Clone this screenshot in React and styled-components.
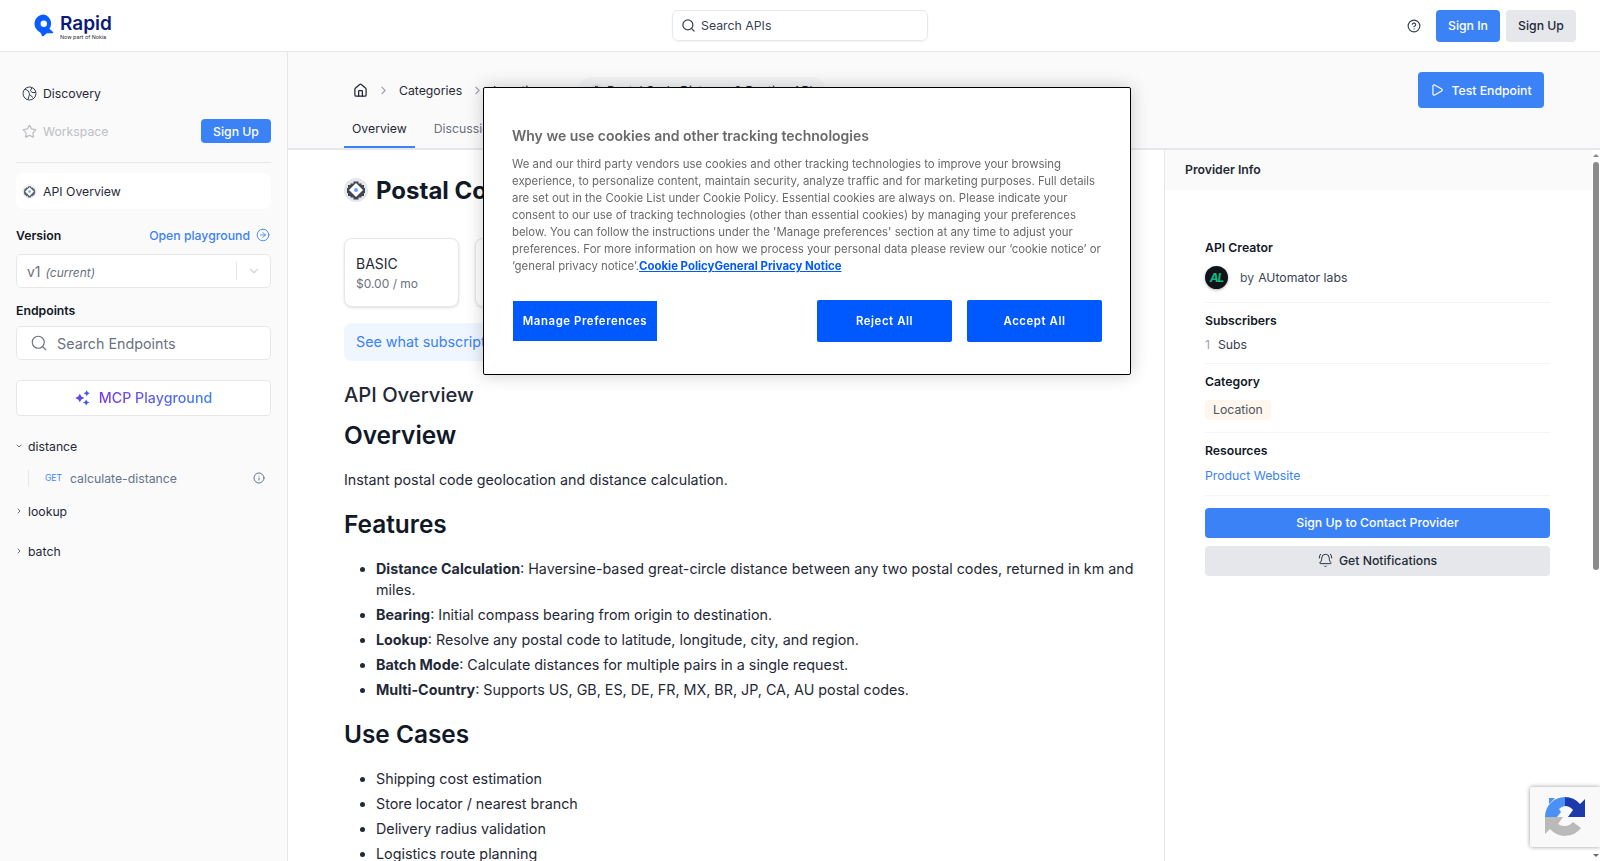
import React from 'react'
import styled, { createGlobalStyle } from 'styled-components'
import { Search, ChevronRight, ChevronDown, Home, Play, BellRing, CircleHelp, Star, CircleArrowRight, Info } from 'lucide-react'

const GlobalStyle = createGlobalStyle`
  html, body { margin: 0; padding: 0; height: 100%; overflow: hidden; background: #fff; }
  body { font-family: Inter, "Liberation Sans", sans-serif; color: #111827; }
  * { box-sizing: border-box; }
`

const Page = styled.div`
  height: 861px;
  display: flex;
  flex-direction: column;
  overflow: hidden;
`

/* top bar */
const TopBar = styled.header`
  height: 52px;
  flex: none;
  display: flex;
  align-items: center;
  padding: 0 24px 0 34px;
  background: #fff;
  border-bottom: 1px solid #e5e7eb;
`
const Logo = styled.div`
  width: 638px;
  display: flex;
  gap: 6px;
  margin-top: 3px;
`
const LogoText = styled.div`
  display: flex;
  flex-direction: column;
  color: #0b1a78;
`
const LogoName = styled.span`
  font-size: 19px;
  font-weight: 600;
  line-height: 20px;
`
const LogoSub = styled.span`
  font-size: 5.4px;
  line-height: 7px;
  color: #1f2937;
  white-space: nowrap;
`
const TopSearch = styled.div`
  width: 256px;
  height: 31px;
  display: flex;
  align-items: center;
  gap: 5px;
  padding: 0 8px;
  border: 1px solid #e5e7eb;
  border-radius: 6px;
  font-size: 12.3px;
  color: #374151;
  box-shadow: 0 1px 2px rgba(0, 0, 0, 0.05);
`
const TopActions = styled.div`
  display: flex;
  align-items: center;
  gap: 6px;
  margin-left: auto;
  color: #374151;
`
const Button = styled.button`
  height: ${p => p.$h || 32}px;
  width: ${p => p.$w ? p.$w + 'px' : 'auto'};
  padding: 0;
  border: none;
  border-radius: 4px;
  background: ${p => p.$grey ? '#e5e7eb' : '#3b82f6'};
  color: ${p => p.$grey ? '#1f2937' : '#fff'};
  font: 500 12.25px Inter, sans-serif;
  display: flex;
  align-items: center;
  justify-content: center;
  gap: 6px;
`
const HelpSlot = styled.div`
  display: flex;
  margin-right: 9px;
`

const Body = styled.div`
  flex: 1;
  min-height: 0;
  display: flex;
`

/* left sidebar */
const Sidebar = styled.aside`
  width: 288px;
  flex: none;
  padding: 22px 16px 0;
  background: #fafafa;
  border-right: 1px solid #e5e7eb;
  font-size: 12.25px;
`
const NavRow = styled.div`
  display: flex;
  align-items: center;
  justify-content: space-between;
  height: 38px;
  padding-left: 6px;
  color: ${p => p.$muted ? '#bdbfc4' : '#1f2937'};
`
const NavLabel = styled.span`
  display: flex;
  align-items: center;
  gap: 6px;
`
const Divider = styled.div`
  height: 1px;
  background: #e5e7eb;
  margin: 12px 0 10px;
`
const OverviewCard = styled.div`
  height: 36px;
  display: flex;
  align-items: center;
  gap: 6px;
  padding-left: 6px;
  background: #fff;
  border-radius: 8px;
  color: #1f2937;
`
const FieldHead = styled.div`
  display: flex;
  justify-content: space-between;
  align-items: center;
  height: 18px;
  margin: ${p => p.$top}px 0 ${p => p.$bottom}px;
  font-weight: 600;
  color: #111827;
`
const PlaygroundLink = styled.span`
  display: flex;
  align-items: center;
  gap: 6px;
  font-weight: 500;
  color: #3b82f6;
  padding-right: 1px;
`
const SelectBox = styled.div`
  height: 34px;
  display: flex;
  align-items: center;
  justify-content: space-between;
  padding: 0 9px 0 10px;
  background: #fff;
  border: 1px solid #e5e7eb;
  border-radius: 5px;
  font-size: 14px;
  color: #6b7280;
`
const Current = styled.em`
  font-size: 12px;
  margin-left: 5px;
`
const SelectEnd = styled.span`
  display: flex;
  align-items: center;
  gap: 10px;
  color: #d1d5db;
`
const SelectBar = styled.span`
  width: 1px;
  height: 18px;
  background: #e5e7eb;
`
const SearchBox = styled.div`
  height: 34px;
  display: flex;
  align-items: center;
  gap: 9px;
  padding-left: 13px;
  background: #fff;
  border: 1px solid #e5e7eb;
  border-radius: 5px;
  font-size: 14.3px;
  color: #6b7280;
`
const McpButton = styled.div`
  height: 36px;
  margin: 20px 0 21px;
  display: flex;
  align-items: center;
  justify-content: center;
  gap: 8px;
  background: #fff;
  border: 1px solid #e5e7eb;
  border-radius: 4px;
  font-size: 14.25px;
  font-weight: 500;
  line-height: 17px;
  padding-bottom: 1px;
`
const McpLabel = styled.span`
  background: linear-gradient(90deg, #7c3aed, #3b82f6);
  -webkit-background-clip: text;
  background-clip: text;
  color: transparent;
`
const TreeGroup = styled.div`
  display: flex;
  align-items: center;
  gap: 5px;
  height: 18px;
  margin-left: -1px;
  margin-bottom: ${p => p.$gap}px;
  color: #1f2937;
`
const TreeItem = styled.div`
  display: flex;
  align-items: center;
  height: 16px;
  margin: 0 6px 16px 12px;
  padding-left: 16px;
  border-left: 1px solid #e5e7eb;
  color: #64748b;
`
const Method = styled.span`
  font-size: 8.5px;
  color: #3b82f6;
  width: 25px;
`
const ItemName = styled.span`
  flex: 1;
`

/* main column */
const Main = styled.main`
  flex: 1;
  min-width: 0;
  display: flex;
  flex-direction: column;
`
const MainHead = styled.div`
  height: 98px;
  flex: none;
  padding: 0 56px;
  display: flex;
  justify-content: space-between;
  background: #fafafa;
  border-bottom: 2px solid #e5e7eb;
`
const HeadLeft = styled.div`
  display: flex;
  flex-direction: column;
`
const Crumbs = styled.div`
  height: 26px;
  margin-top: 25px;
  display: flex;
  align-items: center;
  gap: 9px;
  padding-left: 9px;
  font-size: 12.25px;
  color: #1f2937;
`
const CrumbPill = styled.span`
  height: 26px;
  display: flex;
  align-items: center;
  gap: 4px;
  padding: 0 12px;
  border-radius: 13px;
  background: #f3f4f6;
  margin-left: 26px;
`
const Tabs = styled.div`
  display: flex;
  margin-top: 11px;
  gap: 4px;
`
const Tab = styled.div`
  height: 34px;
  padding: 7px 8px 0;
  font-size: 12.25px;
  color: ${p => p.$active ? '#1f2937' : '#6b7280'};
  border-bottom: 2px solid ${p => p.$active ? '#3b82f6' : 'transparent'};
  margin-bottom: -2px;
  margin-left: ${p => p.$push || 0}px;
`
const TestButton = styled(Button)`
  margin-top: 20px;
  gap: 7px;
`
const Columns = styled.div`
  flex: 1;
  min-height: 0;
  display: flex;
`
const Content = styled.div`
  flex: 1;
  min-width: 0;
  padding: 25px 28px 0 56px;
  overflow: hidden;
`
const TitleRow = styled.div`
  display: flex;
  align-items: center;
  gap: 8px;
  height: 30px;
`
const Title = styled.h1`
  margin: 0;
  font-size: 24px;
  font-weight: 700;
  color: #111827;
  white-space: nowrap;
`
const Plans = styled.div`
  display: flex;
  gap: 16px;
  margin-top: 33px;
`
const PlanCard = styled.div`
  width: 115px;
  height: 69px;
  padding: 14px 11px;
  background: #fff;
  border: 1px solid #e5e7eb;
  border-radius: 8px;
  box-shadow: 0 1px 3px rgba(0, 0, 0, 0.12);
`
const PlanName = styled.div`
  font-size: 14px;
  line-height: 21px;
  color: #1f2937;
`
const PlanPrice = styled.div`
  margin-top: 1px;
  font-size: 12px;
  line-height: 18px;
  color: #6b7280;
`
const Banner = styled.div`
  width: 700px;
  height: 38px;
  margin-top: 16px;
  padding: 0 12px 2px;
  display: flex;
  align-items: center;
  background: #eff6ff;
  border-radius: 8px;
  font-size: 14.3px;
  color: #3b82f6;
  white-space: nowrap;
`
const Article = styled.article`
  color: #1f2937;
  font-size: 14.3px;
  line-height: 25px;
`
const DocTitle = styled.h2`
  margin: 20px 0 0;
  font-size: 20.2px;
  font-weight: 500;
  line-height: 28px;
`
const H2 = styled.h2`
  margin: ${p => p.$top}px 0 ${p => p.$bottom}px;
  font-size: 24.4px;
  font-weight: 600;
  line-height: 32px;
  color: #111827;
`
const Para = styled.p`
  margin: 0;
`
const List = styled.ul`
  margin: 0;
  padding-left: 32px;
`
const ListItem = styled.li`
  line-height: 21px;
  margin-bottom: 4px;
`

/* right panel */
const Panel = styled.aside`
  width: 436px;
  flex: none;
  position: relative;
  border-left: 1px solid #e5e7eb;
  padding-right: 8px;
`
const PanelHead = styled.div`
  height: 40px;
  display: flex;
  align-items: center;
  padding: 0 0 2px 20px;
  background: #fafafa;
  font-size: 12.25px;
  font-weight: 600;
  color: #1f2937;
`
const PanelBody = styled.div`
  padding: 49px 42px 0 40px;
`
const Section = styled.div`
  padding-bottom: ${p => p.$pb}px;
  margin-bottom: 9px;
  border-bottom: 1px solid #f3f4f6;
`
const SectionLabel = styled.div`
  font-size: 12.25px;
  font-weight: 600;
  line-height: 18px;
  color: #111827;
`
const CreatorRow = styled.div`
  display: flex;
  align-items: center;
  gap: 12px;
  margin-top: 9px;
  font-size: 12.25px;
  color: #374151;
`
const By = styled.span`
  margin-right: 4px;
  color: #4b5563;
`
const Avatar = styled.span`
  width: 23px;
  height: 23px;
  border-radius: 50%;
  display: flex;
  align-items: center;
  justify-content: center;
  background: #101418;
  color: #10b981;
  font-size: 12px;
  font-weight: 700;
  font-style: italic;
  letter-spacing: -1px;
  box-shadow: 0 1px 3px rgba(0, 0, 0, 0.3);
`
const SubsRow = styled.div`
  display: flex;
  gap: 8px;
  margin-top: 6px;
  font-size: 12.25px;
  line-height: 18px;
  color: #374151;
`
const SubsCount = styled.span`
  color: #9ca3af;
`
const Tag = styled.span`
  display: inline-block;
  height: 20px;
  margin-top: 9px;
  padding: 0 8px;
  border-radius: 4px;
  background: #fff7ed;
  font-size: 12.25px;
  line-height: 20px;
  color: #4b5563;
`
const PanelLink = styled.div`
  margin-top: 7px;
  font-size: 12.25px;
  line-height: 18px;
  color: #3b82f6;
`
const PanelButtons = styled.div`
  display: flex;
  flex-direction: column;
  gap: 8px;
  margin-top: 12px;
`
const PanelButton = styled(Button)`
  padding-bottom: 2px;
`
const ScrollTrack = styled.div`
  position: absolute;
  top: 0;
  right: 0;
  bottom: 0;
  width: 8px;
  background: #fff;
`
const ScrollThumb = styled.div`
  position: absolute;
  top: 12px;
  left: 1px;
  width: 6px;
  height: 408px;
  border-radius: 3px;
  background: #8b8b8b;
`
const ScrollArrow = styled.div`
  position: absolute;
  left: 1px;
  ${p => p.$up ? 'top: 4px;' : 'bottom: 4px;'}
  border-left: 3px solid transparent;
  border-right: 3px solid transparent;
  ${p => p.$up ? 'border-bottom: 3px solid #8b8b8b;' : 'border-top: 3px solid #6b6b6b;'}
`

/* cookie dialog */
const CookieDialog = styled.div`
  position: fixed;
  left: 483px;
  top: 87px;
  width: 648px;
  height: 288px;
  padding: 38px 28px 0 28px;
  background: #fff;
  border: 1px solid #000;
  border-radius: 2px;
  box-shadow: 0 0 18px rgba(0, 0, 0, 0.2);
`
const CookieTitle = styled.h3`
  margin: 0 0 10px;
  font-size: 14px;
  font-weight: 600;
  line-height: 20px;
  color: #696969;
`
const CookieText = styled.p`
  margin: 0;
  font-size: 11.4px;
  line-height: 17px;
  color: #696969;
`
const CookieLink = styled.a`
  font-weight: 700;
  color: #0059ff;
  text-decoration: underline;
`
const CookieActions = styled.div`
  display: flex;
  align-items: flex-end;
  margin-top: 25px;
  padding-left: 1px;
`
const CookieButton = styled.button`
  height: ${p => p.$wide ? 40 : 42}px;
  width: ${p => p.$wide ? 144 : 135}px;
  margin-left: ${p => p.$push || 0}px;
  margin-bottom: ${p => p.$wide ? 1 : 0}px;
  border: none;
  border-radius: ${p => p.$wide ? 0 : 2}px;
  background: #0059ff;
  color: #fff;
  font: 600 11.4px Inter, sans-serif;
  letter-spacing: 0.05em;
`

const RecaptchaBadge = styled.div`
  position: fixed;
  left: 1530px;
  top: 787px;
  width: 70px;
  height: 60px;
  display: flex;
  align-items: center;
  padding-left: 14px;
  background: #f9f9f9;
  border-radius: 2px 0 0 2px;
  box-shadow: 0 0 4px rgba(0, 0, 0, 0.4);
`

const RapidIcon = () => (
  <svg width="20" height="23" viewBox="0 0 20 23">
    <path d="M9.800 0.500a9.300 9.300 0 0 0-4 17.700c0.800 0.400 1.300 1 1.500 1.900l0.300 1.200c0.200 1 1.200 1.300 2 0.700l2.500-2.200c0.500-0.400 1-0.500 1.600-0.500h4.800c0.700 0 1-0.800 0.500-1.300l-3.500-3.200a9.300 9.300 0 0 0-5.600-14.300zm0 6.100a3.200 3.200 0 1 1 0 6.400 3.200 3.200 0 0 1 0-6.400z" fill="#0a5cff" fillRule="evenodd" />
  </svg>
)
const GlobeIcon = () => (
  <svg width="15" height="15" viewBox="0 0 15 15" fill="none" stroke="#374151" strokeWidth="1">
    <circle cx="7.500" cy="7.500" r="6.500" />
    <path d="M3 3l3.500 2 1 3.500-1.500 5M10 1.500L8.500 4.500l1.500 2 3.500 0M7.500 8.500l3.500 3" />
  </svg>
)
const ApiIcon = ({ size, plain }) => (
  <svg width={size} height={size} viewBox="0 0 24 24">
    <circle cx="12" cy="12" r="12" fill={plain ? '#f3f4f6' : '#e5e7eb'} />
    <path d="M9.500 3.500h5v2h3v1.500h2.500v3h1v5h-1v3h-2.500v1.500h-3v2h-5v-2h-3v-1.500H4v-3H3v-5h1v-3h2.500V5.500h3z" fill={plain ? '#5b6270' : '#3f4652'} />
    <path d="M12 5l7 7-7 7-7-7z" fill="#fff" />
    <circle cx="12" cy="12" r="2" fill="#6f9ff0" />
  </svg>
)
const SparkleIcon = () => (
  <svg width="16" height="16" viewBox="0 0 15 15">
    <defs>
      <linearGradient id="mcp" x1="0" y1="0" x2="1" y2="0">
        <stop offset="0" stopColor="#7c3aed" />
        <stop offset="1" stopColor="#2563eb" />
      </linearGradient>
    </defs>
    <path d="M4.500 3.500l1.500 2.500 2.800 1.500-2.800 1.500-1.500 2.500-1.500-2.500L0.200 7.500 3 6zM11 0.200l1 1.800 2 1-2 1-1 1.800-1-1.800-2-1 2-1zM10.500 9l1 1.700 2 1-2 1-1 1.800-1-1.800-2-1 2-1z" fill="url(#mcp)" />
  </svg>
)
const RecaptchaIcon = () => (
  <svg width="42" height="42" viewBox="0 0 42 42">
    <path d="M21 1v9a11 11 0 0 1 8 4l-5 7h17V3l-5 5A20 20 0 0 0 21 1z" fill="#1c3aa9" />
    <path d="M21 1A20 20 0 0 0 1 21h12l4-5-2-3a11 11 0 0 1 6-3zM5 2l6 0-6 6z" fill="#4a90f5" />
    <path d="M1 21v17l5-5a20 20 0 0 0 31-1l-8-6a11 11 0 0 1-15 2l5-7z" fill="#bababa" />
  </svg>
)

const features = [
  ['Distance Calculation', ': Haversine-based great-circle distance between any two postal codes, returned in km and miles.'],
  ['Bearing', ': Initial compass bearing from origin to destination.'],
  ['Lookup', ': Resolve any postal code to latitude, longitude, city, and region.'],
  ['Batch Mode', ': Calculate distances for multiple pairs in a single request.'],
  ['Multi-Country', ': Supports US, GB, ES, DE, FR, MX, BR, JP, CA, AU postal codes.'],
]
const useCases = ['Shipping cost estimation', 'Store locator / nearest branch', 'Delivery radius validation', 'Logistics route planning']

export default function App() {
  return (
    <Page>
      <GlobalStyle />
      <TopBar>
        <Logo>
          <RapidIcon />
          <LogoText>
            <LogoName>Rapid</LogoName>
            <LogoSub>Now part of Nokia</LogoSub>
          </LogoText>
        </Logo>
        <TopSearch><Search size={15} />Search APIs</TopSearch>
        <TopActions>
          <HelpSlot><CircleHelp size={14} /></HelpSlot>
          <Button $w={64}>Sign In</Button>
          <Button $w={70} $grey>Sign Up</Button>
        </TopActions>
      </TopBar>
      <Body>
        <Sidebar>
          <NavRow><NavLabel><GlobeIcon />Discovery</NavLabel></NavRow>
          <NavRow $muted><NavLabel><Star size={15} />Workspace</NavLabel><Button $w={70} $h={24}>Sign Up</Button></NavRow>
          <Divider />
          <OverviewCard><ApiIcon size={15} plain />API Overview</OverviewCard>
          <FieldHead $top={17} $bottom={10}>Version<PlaygroundLink>Open playground<CircleArrowRight size={14} strokeWidth={1.5} /></PlaygroundLink></FieldHead>
          <SelectBox><span>v1<Current>(current)</Current></span><SelectEnd><SelectBar /><ChevronDown size={14} /></SelectEnd></SelectBox>
          <FieldHead $top={13} $bottom={7}>Endpoints</FieldHead>
          <SearchBox><Search size={18} strokeWidth={1.5} />Search Endpoints</SearchBox>
          <McpButton><SparkleIcon /><McpLabel>MCP Playground</McpLabel></McpButton>
          <TreeGroup $gap={15}><ChevronDown size={8} />distance</TreeGroup>
          <TreeItem><Method>GET</Method><ItemName>calculate-distance</ItemName><Info size={12} /></TreeItem>
          <TreeGroup $gap={22}><ChevronRight size={8} />lookup</TreeGroup>
          <TreeGroup $gap={0}><ChevronRight size={8} />batch</TreeGroup>
        </Sidebar>
        <Main>
          <MainHead>
            <HeadLeft>
              <Crumbs>
                <Home size={15} /><ChevronRight size={13} color="#9ca3af" />Categories<ChevronRight size={13} color="#9ca3af" />Location
                <CrumbPill><ApiIcon size={13} />Postal Code Distance &amp; Routing API</CrumbPill>
              </Crumbs>
              <Tabs>
                <Tab $active>Overview</Tab>
                <Tab $push={7}>Discussions</Tab>
              </Tabs>
            </HeadLeft>
            <TestButton $w={126} $h={36}><Play size={14} />Test Endpoint</TestButton>
          </MainHead>
          <Columns>
            <Content>
              <TitleRow><ApiIcon size={24} /><Title>Postal Code Distance &amp; Routing API</Title></TitleRow>
              <Plans>
                <PlanCard><PlanName>BASIC</PlanName><PlanPrice>$0.00 / mo</PlanPrice></PlanCard>
                <PlanCard><PlanName>PRO</PlanName><PlanPrice>$9.00 / mo</PlanPrice></PlanCard>
                <PlanCard><PlanName>ULTRA</PlanName><PlanPrice>$29.00 / mo</PlanPrice></PlanCard>
              </Plans>
              <Banner>See what subscription plan fits you best</Banner>
              <Article>
                <DocTitle>API Overview</DocTitle>
                <H2 $top={10} $bottom={16}>Overview</H2>
                <Para>Instant postal code geolocation and distance calculation.</Para>
                <H2 $top={16} $bottom={18}>Features</H2>
                <List>
                  {features.map(([name, text]) => <ListItem key={name}><strong>{name}</strong>{text}</ListItem>)}
                </List>
                <H2 $top={18} $bottom={18}>Use Cases</H2>
                <List>
                  {useCases.map(text => <ListItem key={text}>{text}</ListItem>)}
                </List>
              </Article>
            </Content>
            <Panel>
              <PanelHead>Provider Info</PanelHead>
              <PanelBody>
                <Section $pb={13}>
                  <SectionLabel>API Creator</SectionLabel>
                  <CreatorRow><Avatar>AL</Avatar><span><By>by</By>AUtomator labs</span></CreatorRow>
                </Section>
                <Section $pb={9}>
                  <SectionLabel>Subscribers</SectionLabel>
                  <SubsRow><SubsCount>1</SubsCount>Subs</SubsRow>
                </Section>
                <Section $pb={12}>
                  <SectionLabel>Category</SectionLabel>
                  <Tag>Location</Tag>
                </Section>
                <Section $pb={10}>
                  <SectionLabel>Resources</SectionLabel>
                  <PanelLink>Product Website</PanelLink>
                </Section>
                <PanelButtons>
                  <PanelButton $h={30}>Sign Up to Contact Provider</PanelButton>
                  <PanelButton $h={30} $grey><BellRing size={15} strokeWidth={1.5} />Get Notifications</PanelButton>
                </PanelButtons>
              </PanelBody>
              <ScrollTrack>
                <ScrollArrow $up />
                <ScrollThumb />
                <ScrollArrow />
              </ScrollTrack>
            </Panel>
          </Columns>
        </Main>
      </Body>
      <CookieDialog>
        <CookieTitle>Why we use cookies and other tracking technologies</CookieTitle>
        <CookieText>
          We and our third party vendors use cookies and other tracking technologies to improve your browsing experience, to personalize content, maintain security, analyze traffic and for marketing purposes. Full details are set out in the Cookie List under Cookie Policy. Essential cookies are always on. Please indicate your consent to our use of tracking technologies (other than essential cookies) by managing your preferences below. You can follow the instructions under the 'Manage preferences' section at any time to adjust your preferences. For more information on how we process your personal data please review our ‘cookie notice’ or ‘general privacy notice’.<CookieLink>Cookie Policy</CookieLink><CookieLink>General Privacy Notice</CookieLink>
        </CookieText>
        <CookieActions>
          <CookieButton $wide>Manage Preferences</CookieButton>
          <CookieButton $push={160}>Reject All</CookieButton>
          <CookieButton $push={15}>Accept All</CookieButton>
        </CookieActions>
      </CookieDialog>
      <RecaptchaBadge><RecaptchaIcon /></RecaptchaBadge>
    </Page>
  )
}
